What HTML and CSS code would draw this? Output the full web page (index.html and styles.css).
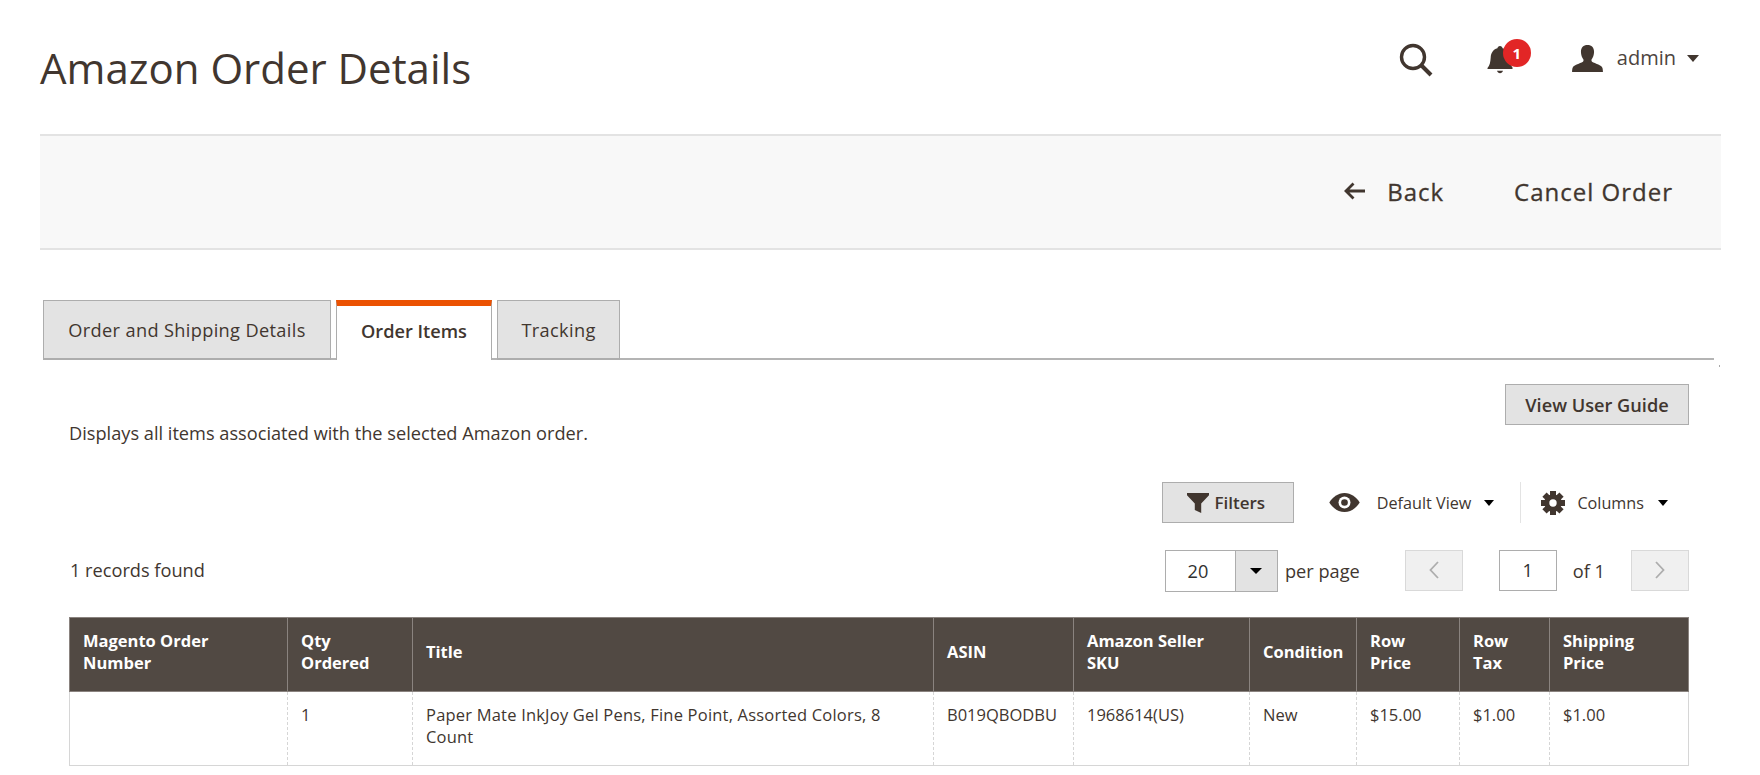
FILE: index.html
```html
<!DOCTYPE html>
<html lang="en">
<head>
<meta charset="utf-8">
<title>Amazon Order Details</title>
<link rel="stylesheet" href="styles.css">
</head>
<body>
<div class="page">
  <header class="top">
    <h1 class="title">Amazon Order Details</h1>
    <div class="top-actions">
      <svg class="ico-search" viewBox="0 0 34 34"><circle cx="14" cy="14" r="11.500" fill="none" stroke="#41362f" stroke-width="3.400"/><path d="M22.500 22.500 32 32" stroke="#41362f" stroke-width="4" fill="none"/></svg>
      <div class="bell">
        <svg class="ico-bell" viewBox="0 0 26 28"><path d="M13 .5c1.500 0 2.400 1 2.600 2.300 4.400 1 6.400 4.400 6.700 8.700.3 4.700 1 8.200 3.200 10.500v1.500H.5V22.500c2.200-2.300 2.900-5.800 3.200-10.500C4 7.700 6 4 10.400 2.800 10.600 1.500 11.500.5 13 .5z" fill="#41362f"/><path d="M10 25.300h6c-.4 1.500-1.600 2.400-3 2.400s-2.600-.9-3-2.400z" fill="#41362f"/></svg>
        <span class="badge">1</span>
      </div>
      <div class="user">
        <svg class="ico-user" viewBox="0 0 32 28"><path d="M16 0c4.300 0 6.800 2.800 6.800 7 0 3.400-1.100 6.200-2.700 8.200 0 1.500.4 2.300 2 3 4 1.700 8.200 3 9.300 5.300.4 1 .6 2.700.6 4.500H0c0-1.800.2-3.500.6-4.500 1.100-2.300 5.300-3.600 9.300-5.300 1.600-.7 2-1.500 2-3-1.600-2-2.700-4.800-2.700-8.200C9.200 2.800 11.700 0 16 0z" fill="#41362f"/></svg>
        <span class="user-name">admin</span>
        <span class="caret caret-lg"></span>
      </div>
    </div>
  </header>

  <div class="action-bar">
    <a class="action back"><svg class="ico-back" viewBox="0 0 22 18"><path d="M21 9H2.500M9.500 1.500 2 9l7.500 7.500" fill="none" stroke="#41362f" stroke-width="2.800"/></svg>Back</a>
    <a class="action cancel">Cancel Order</a>
  </div>

  <nav class="tabs">
    <a class="tab tab-first">Order and Shipping Details</a>
    <a class="tab tab-active">Order Items</a>
    <a class="tab tab-last">Tracking</a>
  </nav>

  <main class="content">
    <div class="intro">
      <p class="intro-text">Displays all items associated with the selected Amazon order.</p>
      <a class="btn guide">View User Guide</a>
    </div>

    <div class="toolbar">
      <a class="btn filters"><svg class="ico-filter" viewBox="0 0 24 24"><path d="M0 1h24v2.500l-8.500 9V23l-7-3.500v-7L0 3.500z" fill="#41362f"/></svg>Filters</a>
      <div class="view">
        <svg class="ico-eye" viewBox="0 0 32 20"><path d="M16 0c7 0 12.500 4.500 16 10-3.500 5.500-9 10-16 10S3.500 15.500 0 10C3.500 4.500 9 0 16 0z" fill="#41362f"/><circle cx="16" cy="10" r="6.300" fill="#fff"/><circle cx="16" cy="10" r="3.500" fill="#41362f"/></svg>
        <span>Default View</span><span class="caret"></span>
      </div>
      <div class="columns">
        <svg class="ico-gear" viewBox="0 0 24 24">
          <g fill="#41362f">
            <rect x="9" y="0" width="6" height="24"/>
            <rect x="0" y="9" width="24" height="6"/>
            <rect x="9" y="0" width="6" height="24" transform="rotate(45 12 12)"/>
            <rect x="9" y="0" width="6" height="24" transform="rotate(-45 12 12)"/>
          </g>
          <circle cx="12" cy="12" r="6.200" fill="none" stroke="#41362f" stroke-width="5"/>
          <circle cx="12" cy="12" r="3.700" fill="#fff"/>
        </svg>
        <span>Columns</span><span class="caret"></span>
      </div>
    </div>

    <div class="pager-row">
      <span class="records">1 records found</span>
      <div class="pager">
        <div class="select"><span class="select-val">20</span><span class="select-btn"><span class="caret"></span></span></div>
        <span class="per-page">per page</span>
        <a class="nav-btn prev"><svg viewBox="0 0 12 20"><path d="M10 2 2.500 10 10 18" fill="none" stroke="#adadad" stroke-width="1.800"/></svg></a>
        <span class="page-input">1</span>
        <span class="of">of 1</span>
        <a class="nav-btn next"><svg viewBox="0 0 12 20"><path d="M2 2l7.500 8L2 18" fill="none" stroke="#adadad" stroke-width="1.800"/></svg></a>
      </div>
    </div>

    <table class="grid">
      <colgroup>
        <col class="c1"><col class="c2"><col class="c3"><col class="c4"><col class="c5"><col class="c6"><col class="c7"><col class="c8"><col class="c9">
      </colgroup>
      <thead>
        <tr>
          <th>Magento Order Number</th>
          <th>Qty<br>Ordered</th>
          <th>Title</th>
          <th>ASIN</th>
          <th>Amazon Seller SKU</th>
          <th>Condition</th>
          <th>Row<br>Price</th>
          <th>Row<br>Tax</th>
          <th>Shipping Price</th>
        </tr>
      </thead>
      <tbody>
        <tr>
          <td></td>
          <td>1</td>
          <td class="cell-title">Paper Mate InkJoy Gel Pens, Fine Point, Assorted Colors, 8 Count</td>
          <td>B019QBODBU</td>
          <td>1968614(US)</td>
          <td>New</td>
          <td>$15.00</td>
          <td>$1.00</td>
          <td>$1.00</td>
        </tr>
      </tbody>
    </table>
  </main>
</div>
</body>
</html>
```
FILE: styles.css
```css
* { box-sizing: border-box; }
html, body { margin: 0; padding: 0; background: #fff; }
body {
  font-family: "Open Sans", "Noto Sans", sans-serif;
  font-size: 18.200px;
  color: #41362f;
  overflow: hidden;
  height: 775px;
}
.page { width: 1760px; padding: 0 39px 0 40px; }

.top { display: flex; justify-content: space-between; height: 134px; }
.title { margin: 41px 0 0; font-size: 42px; line-height: 54px; font-weight: 400; }
.top-actions { display: flex; align-items: flex-start; padding-right: 22px; }
.ico-search { width: 34px; height: 34px; margin-top: 43px; }
.bell { position: relative; margin: 45px 0 0 54px; width: 27px; height: 29px; }
.ico-bell { width: 26px; height: 29px; display: block; }
.badge {
  position: absolute; left: 16px; top: -6px; width: 28px; height: 28px;
  border-radius: 50%; background: #e22626; color: #fff;
  font-size: 15px; font-weight: 700; line-height: 28px; text-align: center;
}
.user { display: flex; align-items: center; margin: 43px 0 0 58px; height: 30px; }
.ico-user { width: 31px; height: 27px; }
.user-name { margin-left: 14px; font-size: 20px; line-height: 30px; color: #4d443e; }
.caret {
  display: inline-block; width: 0; height: 0;
  border-left: 6px solid transparent; border-right: 6px solid transparent;
  border-top: 6px solid #000;
}
.caret-lg { margin-left: 11px; border-top-color: #41362f; border-left-width: 6.500px; border-right-width: 6.500px; border-top-width: 7px; }

.action-bar {
  display: flex; justify-content: flex-end; align-items: center;
  height: 116px; background: #f8f8f8; padding-bottom: 2px;
  border-top: 2px solid #e3e3e3; border-bottom: 2px solid #e3e3e3;
  padding-right: 48px;
}
.action { font-size: 24px; letter-spacing: 1px; -webkit-text-stroke: 0.300px #41362f; display: flex; align-items: center; }
.back { margin-right: 70px; }
.ico-back { width: 22px; height: 18px; margin-right: 21px; }

.tabs {
  position: relative;
  display: flex; margin: 50px 7px 0 3px; height: 60px;
  border-bottom: 2px solid #b4b4b4;
}
.tabs::after {
  content: ""; position: absolute; right: -6px; top: 65px;
  width: 1px; height: 2px; background: #a8a8a8;
}
.tab {
  display: flex; align-items: center; justify-content: center;
  height: 60px; margin-right: 5px; letter-spacing: 0.350px;
  background: #e3e3e3; border: 1px solid #adadad; border-bottom-width: 2px;
}
.tab-first { width: 288px; }
.tab-active {
  width: 156px; letter-spacing: 0; padding-bottom: 5px;
  background: #fff; font-weight: 600; border-top: 6px solid #eb5202;
  border-bottom: 0;
}
.tab-last { width: 123px; }

.content { padding: 0 32px 0 29px; }
.intro { display: flex; justify-content: space-between; align-items: flex-start; height: 123px; padding-top: 24px; }
.intro-text { margin: 36px 0 0 0; line-height: 26px; }
.btn {
  display: flex; align-items: center; justify-content: center;
  height: 41px; background: #e3e3e3; border: 1px solid #adadad; font-weight: 600;
}
.guide { width: 184px; }

.toolbar { display: flex; justify-content: flex-end; align-items: center; height: 41px; font-size: 16.200px; margin-top: -1px; }
.filters { width: 132px; font-size: 17px; margin-right: 35px; padding-right: 3px; }
.ico-filter { width: 22px; height: 22px; margin-right: 5px; }
.view, .columns { display: flex; align-items: center; height: 41px; }
.view { border-right: 1px solid #e3e3e3; padding-right: 26px; }
.ico-eye { width: 31px; height: 19px; margin-right: 17px; }
.view .caret, .columns .caret { margin-left: 13px; border-left-width: 5.500px; border-right-width: 5.500px; }
.columns { padding-left: 20px; padding-right: 21px; }
.columns .caret { margin-left: 14px; }
.ico-gear { width: 24px; height: 24px; margin-right: 12px; }

.pager-row { display: flex; justify-content: space-between; align-items: center; height: 41px; margin-top: 27px; }
.records { margin-left: 1px; margin-top: -2px; }
.pager { display: flex; align-items: center; }
.select { display: flex; width: 113px; height: 42px; border: 1px solid #adadad; }
.select-val { flex: 1; text-align: center; line-height: 40px; color: #303030; padding-right: 5px; }
.select-btn { width: 42px; background: #e3e3e3; border-left: 1px solid #adadad; display: flex; align-items: center; justify-content: center; }
.per-page { margin-left: 7px; margin-right: 45px; }
.nav-btn { width: 58px; height: 41px; background: #f0f0f0; border: 1px solid #d9d9d9; display: flex; align-items: center; justify-content: center; }
.nav-btn svg { width: 12px; height: 20px; margin-top: -2px; }
.page-input { width: 58px; height: 41px; margin-left: 36px; border: 1px solid #adadad; text-align: center; line-height: 39px; color: #303030; }
.of { margin-left: 16px; margin-right: 26px; }

.grid { width: 1619px; margin-top: 26px; border-collapse: collapse; table-layout: fixed; font-size: 16.500px; line-height: 22px; }
.c1 { width: 218px; } .c2 { width: 125px; } .c3 { width: 521px; } .c4 { width: 140px; } .c5 { width: 176px; }
.c6 { width: 107px; } .c7 { width: 103px; } .c8 { width: 90px; } .c9 { width: 139px; }
.grid th {
  background: #514943; color: #fff; height: 74px; padding: 0 12px 6px 13px;
  font-weight: 700; text-align: left; vertical-align: middle;
  border: 1px solid #8a837f;
}
.grid td {
  height: 74px; padding: 12px 12px 12px 13px; vertical-align: top;
  border-left: 1px dashed #d6d6d6; border-right: 1px dashed #d6d6d6; border-bottom: 1px solid #d6d6d6;
}
.grid td:first-child { border-left: 1px solid #d6d6d6; }
.grid td:last-child { border-right: 1px solid #d6d6d6; }
.grid .cell-title { letter-spacing: 0.200px; }
```
